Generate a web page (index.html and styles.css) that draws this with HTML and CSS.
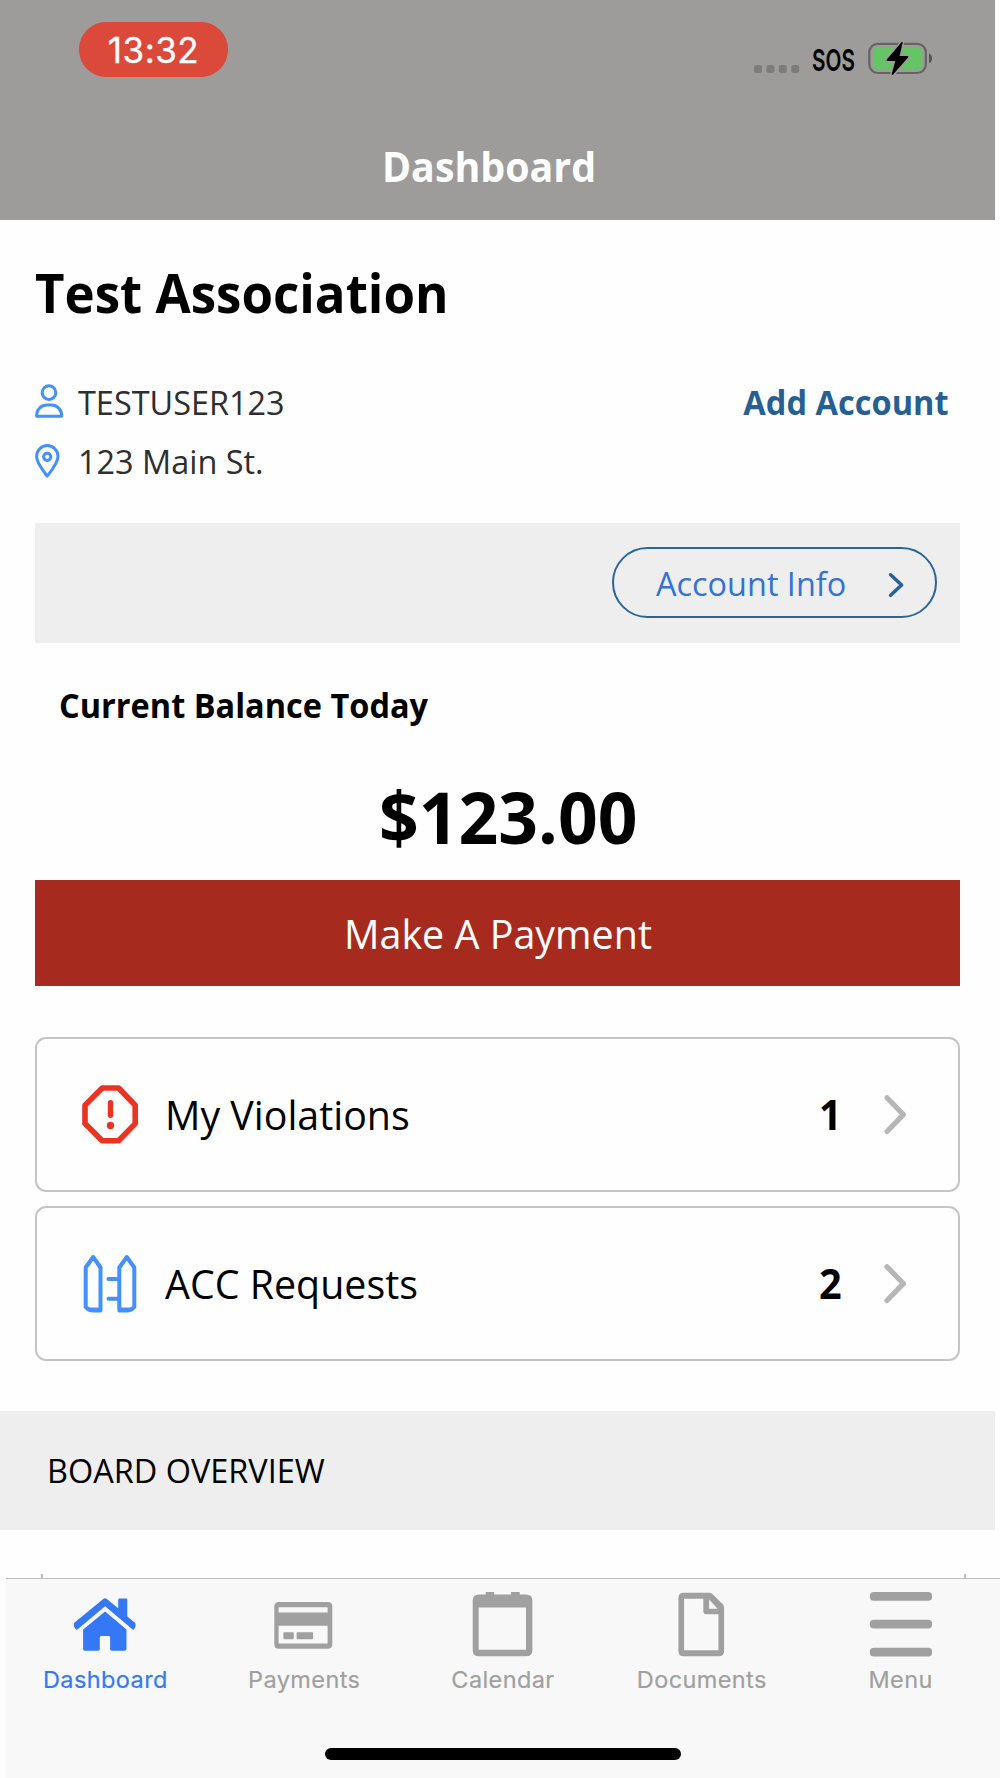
FILE: index.html
```html
<!DOCTYPE html>
<html lang="en">
<head>
<meta charset="utf-8">
<title>Dashboard</title>
<link rel="stylesheet" href="styles.css">
</head>
<body>
<div class="app">
  <header class="header">
    <div class="status">
      <div class="clock"><span class="clock-text">13:32</span></div>
      <div class="signals">
        <svg class="dots" width="46" height="8" viewBox="0 0 46 8"><g fill="#7d7c7a"><rect width="8" height="8" rx="2.5"/><rect x="12.4" width="8" height="8" rx="2.5"/><rect x="24.8" width="8" height="8" rx="2.5"/><rect x="37.2" width="8" height="8" rx="2.5"/></g></svg>
        <span class="sos">SOS</span>
        <svg class="battery" width="66" height="36" viewBox="867 40 66 36">
          <rect x="869.3" y="43.8" width="56.5" height="29.2" rx="8.5" fill="none" stroke="#656463" stroke-width="2.2"/>
          <rect x="873" y="47.5" width="49.3" height="22" rx="4.5" fill="#65c466"/>
          <path d="M929 53.6Q932 55 932 58.4T929 63.2Z" fill="#555453"/>
          <path d="M902 42.6L887.2 60.3H896.3L892.4 74.3L907.7 56.7H898.7Z" fill="#000" stroke="#9d9c9a" stroke-width="4.5" stroke-linejoin="round"/>
          <path d="M902 42.6L887.2 60.3H896.3L892.4 74.3L907.7 56.7H898.7Z" fill="#000" stroke="#000" stroke-width="1.4" stroke-linejoin="round"/>
        </svg>
      </div>
    </div>
    <h1 class="screen-title"><span class="t">Dashboard</span></h1>
  </header>

  <main class="main">
    <h2 class="association"><span class="t">Test Association</span></h2>
    <section class="account">
      <div class="account-lines">
        <div class="line">
          <svg class="user-icon" width="30" height="36" viewBox="35 383 30 36" fill="none" stroke="#4590ff" stroke-width="3"><circle cx="49" cy="392.6" r="6.8"/><path d="M36.6 416.2C36.4 409 42 405.1 47 405.1H51.5C57 405.1 61.9 409.5 61.7 416.2Z" stroke-linejoin="round"/></svg>
          <span class="t">TESTUSER123</span>
        </div>
        <div class="line">
          <svg class="pin-icon" width="30" height="36" viewBox="35 443.7 30 36" fill="none" stroke="#4590ff" stroke-width="3"><path d="M47.2 476.8C43.5 471.8 36.6 464 36.6 457.3A10.7 11 0 0 1 58 457.3C58 464 51 471.8 47.2 476.8Z" stroke-linejoin="round"/><circle cx="47.2" cy="457.5" r="3.6"/></svg>
          <span class="t">123 Main St.</span>
        </div>
      </div>
      <a class="add-account"><span class="t">Add Account</span></a>
    </section>

    <div class="info-bar">
      <a class="pill">
        <span class="t">Account Info</span>
        <svg width="16" height="26" viewBox="0 0 16 26" fill="none" stroke="#2b6296" stroke-width="3.6" stroke-linecap="round" stroke-linejoin="round"><path d="M2.6 2.8L13.6 13L2.6 23.2"/></svg>
      </a>
    </div>

    <div class="balance-label"><span class="t">Current Balance Today</span></div>
    <div class="balance"><span class="t">$123.00</span></div>
    <a class="pay"><span class="t">Make A Payment</span></a>

    <div class="cards">
      <a class="card">
        <svg width="58" height="60" viewBox="81 1084 58 60"><path d="M102.2 1088H118.6L135.2 1105.2V1123.6L118.6 1140.8H102.2L85 1123.6V1105.2Z" fill="none" stroke="#ea3323" stroke-width="5.6" stroke-linejoin="round"/><path d="M110.5 1102.8V1115.2" stroke="#ea3323" stroke-width="5.4" stroke-linecap="round"/><circle cx="110.5" cy="1125.5" r="3.7" fill="#ea3323"/></svg>
        <span class="t card-name">My Violations</span>
        <span class="t card-count">1</span>
        <svg width="24" height="42" viewBox="0 0 24 42"><path d="M4 4.7L20.4 21.6L4 38.5" fill="none" stroke="#b6b6b6" stroke-width="5.2" stroke-linecap="round" stroke-linejoin="round"/></svg>
      </a>
      <a class="card">
        <svg width="58" height="60" viewBox="81 1253.5 58 60" fill="none" stroke="#4590ff" stroke-width="4" stroke-linejoin="round"><path d="M93.2 1257.5L85.7 1268V1307.5Q88.5 1311 93.5 1311H100.5V1268Z"/><path d="M126.8 1257.5L119.3 1268V1311H126.5Q131.5 1311 134.3 1307.5V1268Z"/><path d="M87 1309.5H100M120 1309.5H133" stroke-width="3"/><path d="M108.5 1279.6H119M108.5 1299.2H119" stroke-linecap="round"/></svg>
        <span class="t card-name">ACC Requests</span>
        <span class="t card-count">2</span>
        <svg width="24" height="42" viewBox="0 0 24 42"><path d="M4 4.7L20.4 21.6L4 38.5" fill="none" stroke="#b6b6b6" stroke-width="5.2" stroke-linecap="round" stroke-linejoin="round"/></svg>
      </a>
    </div>
  </main>

  <section class="board"><span class="t">BOARD OVERVIEW</span></section>
  <div class="board-card"></div>

  <nav class="tabs">
    <div class="tab-row">
      <a class="tab active">
        <svg width="64" height="66" viewBox="73.2 1591 64 66" fill="#3478f6"><path d="M103.5 1598.9Q105 1597.7 107 1598.9L118.4 1608.3V1599.6Q118.4 1598.4 119.6 1598.4H126.3Q127.5 1598.4 127.5 1599.6V1616.4L135.2 1622.8Q137 1626.5 133.5 1630L105.3 1606.3L77 1630Q72.6 1626.5 74.5 1622.8Z"/><path d="M105.3 1611.5L126.7 1629.5V1649Q126.7 1650.7 125 1650.7H112Q110.3 1650.7 110.3 1649V1637.5Q110.3 1636 109 1636H101.5Q100 1636 100 1637.5V1649Q100 1650.7 98.3 1650.7H85Q83.3 1650.7 83.3 1649V1629.5Z"/></svg>
        <span class="tab-name">Dashboard</span>
      </a>
      <a class="tab">
        <svg width="64" height="66" viewBox="272.4 1591 64 66" fill="#a0a0a0"><path fill-rule="evenodd" d="M279.3 1602H328Q332.7 1602 332.7 1606.5V1644.3Q332.7 1648.8 328 1648.8H279.3Q274.7 1648.8 274.7 1644.3V1606.5Q274.7 1602 279.3 1602ZM279 1607.3V1612.5H328V1607.3ZM279 1625.7V1643.6H328V1625.7Z"/><rect x="283.8" y="1632.3" width="10.4" height="6.9" rx="1"/><rect x="297" y="1632.3" width="16.5" height="6.9" rx="1"/></svg>
        <span class="tab-name">Payments</span>
      </a>
      <a class="tab">
        <svg width="64" height="66" viewBox="471.3 1591 64 66" fill="#a0a0a0"><path fill-rule="evenodd" d="M479.5 1594.5H486V1592H494.5V1594.5H511.3V1592H520V1594.5H526.5Q532.7 1594.5 532.7 1600.5V1650Q532.7 1656.3 526.5 1656.3H479.5Q473 1656.3 473 1650V1600.5Q473 1594.5 479.5 1594.5ZM479 1607.5V1649.8H526.3V1607.5Z"/></svg>
        <span class="tab-name">Calendar</span>
      </a>
      <a class="tab">
        <svg width="64" height="66" viewBox="669.9 1591 64 66" fill="#a0a0a0"><path fill-rule="evenodd" d="M683.5 1592.8H709Q711 1592.8 712.5 1594.2L722.5 1604Q724 1605.5 724 1608V1651Q724 1656.3 718.7 1656.3H683.5Q678.3 1656.3 678.3 1651V1598Q678.3 1592.8 683.5 1592.8ZM684 1598.8V1650.3H718.3V1614.3H706.5Q703.2 1614.3 703.2 1611V1598.8ZM709 1599.6V1608.8H717.5Z"/></svg>
        <span class="tab-name">Documents</span>
      </a>
      <a class="tab">
        <svg width="64" height="66" viewBox="868.7 1591 64 66" fill="#a0a0a0"><rect x="869.5" y="1592" width="62.3" height="8.7" rx="4"/><rect x="869.5" y="1619.8" width="62.3" height="8.7" rx="4"/><rect x="869.5" y="1647.7" width="62.3" height="8.7" rx="4"/></svg>
        <span class="tab-name">Menu</span>
      </a>
    </div>
    <div class="home-indicator"></div>
  </nav>
</div>
</body>
</html>
```
FILE: styles.css
```css
* { box-sizing: border-box; }
body { margin: 0; background: #fefefe; font-family: "Open Sans", sans-serif; color: #000; }
h1, h2 { margin: 0; }
svg { display: block; flex: none; overflow: visible; }
.app { width: 1000px; height: 1778px; display: flex; flex-direction: column; overflow: hidden; }
.t { display: inline-block; white-space: nowrap; transform: scaleX(.966); transform-origin: left center; }

/* Header */
.header { width: 995px; height: 220px; flex: none; background: #9d9c9a; }
.status { height: 130px; padding: 22px 62px 0 79px; display: flex; justify-content: space-between; align-items: flex-start; }
.clock { width: 149px; height: 55px; border-radius: 27px; background: #db493a; display: flex; align-items: center; justify-content: center; }
.clock-text { font: 400 35px/55px Inter, sans-serif; letter-spacing: .5px; color: #fff; padding-top: 1px; -webkit-text-stroke: .3px #fff; }
.signals { display: flex; align-items: center; padding-top: 15px; }
.dots { margin: 22px 12px 0 0; }
.sos { width: 55px; font: 600 30.5px/36px Inter, sans-serif; transform: scaleX(.68); transform-origin: left center; margin-top: 5px; }
.screen-title { height: 73px; font-size: 41.5px; line-height: 73px; font-weight: 700; color: #fff; padding-left: 382px; }
.screen-title .t { transform: scaleX(.948); }

/* Account summary */
.main { width: 925px; margin-left: 35px; flex: none; }
.association { margin-top: 37px; font-size: 53px; line-height: 72px; font-weight: 700; }
.association .t { transform: scaleX(.963); }
.account { margin-top: 44px; height: 150px; display: flex; justify-content: space-between; font-size: 33.6px; line-height: 58.5px; }
.line { height: 58.5px; display: flex; align-items: center; gap: 12.5px; color: #2e2e2e; }
.user-icon { margin-bottom: 3px; }
.add-account { font-weight: 700; color: #275f93; }
.add-account .t { transform: scaleX(.97); transform-origin: right center; margin-right: 11.5px; }
.info-bar { height: 119.5px; padding-right: 23px; background: #eee; display: flex; align-items: center; justify-content: flex-end; }
.pill { width: 325px; height: 71px; border: 2.4px solid #2b6699; border-radius: 36px; padding: 0 31px 0 42px; display: flex; align-items: center; justify-content: space-between; font-size: 33.6px; color: #3273d4; }
.pill svg { margin-top: 5px; }
.balance-label { height: 123px; padding-left: 23.5px; font-size: 33.6px; line-height: 124px; font-weight: 700; }
.balance-label .t { transform: scaleX(.968); }
.balance { height: 114.5px; padding-left: 344.3px; font-size: 72px; line-height: 100px; font-weight: 700; }
.pay { height: 106px; padding-left: 308.5px; display: block; background: #a62b1e; color: #fff; font-size: 41px; line-height: 107px; }
.pay .t { transform: scaleX(.962); }

/* Summary cards */
.cards { margin-top: 51px; display: flex; flex-direction: column; gap: 14.5px; }
.card { height: 154.5px; border: 2.4px solid #c5c5c5; border-radius: 11px; padding: 0 51px 0 44px; display: flex; align-items: center; font-size: 41px; }
.card-name { margin-left: 26px; flex: 1; transform: scaleX(.96); }
.card-count { width: 64px; font-weight: 700; }

/* Board overview */
.board { width: 995px; height: 119px; flex: none; margin-top: 50.5px; padding-left: 46.5px; background: #eee; font-size: 33.6px; line-height: 119px; }
.board-card { width: 925px; height: 4px; flex: none; margin: 44px 0 0 41px; border: solid #c0c0c0; border-width: 0 2px; }

/* Tab bar */
.tabs { flex: 1; margin-left: 6px; background: #f8f8f8; border-top: 1.4px solid #bdbdbd; }
.tab-row { display: flex; height: 130px; }
.tab { flex: 1 1 0; padding-top: 12px; display: flex; flex-direction: column; align-items: center; color: #a0a0a0; }
.tab.active { color: #3478f6; }
.tab-name { margin: 8px 0 0; font: 400 23.5px/30px Inter, sans-serif; letter-spacing: .4px; -webkit-text-stroke: .2px currentColor; }
.home-indicator { width: 356px; height: 12px; margin: 39px 0 0 319px; border-radius: 6px; background: #000; }
```
